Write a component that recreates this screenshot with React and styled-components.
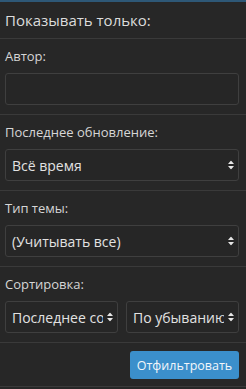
import React from "react";
import styled, { createGlobalStyle } from "styled-components";

const Global = createGlobalStyle`
  html, body { margin: 0; padding: 0; background: #272727; }
  body { font-family: "Open Sans", "Noto Sans", sans-serif; }
  * { box-sizing: border-box; }
`;

const Panel = styled.div`
  width: 246px;
  height: 389px;
  background: #272727;
  border-top: 2px solid #2e5877;
  color: #d6d6d6;
  display: flex;
  flex-direction: column;
`;

const Header = styled.div`
  height: 36px;
  padding: 0 7px 0 5px;
  display: flex;
  align-items: center;
  font-size: 15px;
  color: #dcdcdc;
`;

const Section = styled.div`
  border-top: 1px solid #3a3a3a;
  padding: 9px 7px 9px 5px;
  display: flex;
  flex-direction: column;
`;

const Label = styled.div`
  font-size: 13px;
  line-height: 17px;
  margin-bottom: 8px;
  color: #d6d6d6;
`;

const TextInput = styled.input`
  height: 32px;
  width: 100%;
  background: #262626;
  border: 1px solid #3f3f3f;
  border-radius: 3px;
  outline: none;
  color: #ddd;
  font: inherit;
`;

const SelectWrap = styled.div`
  position: relative;
  flex: 1;
  min-width: 0;
`;

const NativeSelect = styled.select`
  appearance: none;
  -webkit-appearance: none;
  width: 100%;
  height: 32px;
  background: #262626;
  border: 1px solid #3f3f3f;
  border-radius: 3px;
  color: #e2e2e2;
  font-family: "Open Sans", "Noto Sans", sans-serif;
  font-size: 14px;
  padding: 0 ${(p) => (p.$narrow ? "14px" : "20px")} 0 6px;
  outline: none;
  white-space: nowrap;
  overflow: hidden;
`;

const Arrow = styled.svg`
  position: absolute;
  right: 5px;
  top: 50%;
  transform: translateY(-50%);
  pointer-events: none;
`;

const Row = styled.div`
  display: flex;
  gap: 8px;
`;

const Footer = styled.div`
  border-top: 1px solid #3a3a3a;
  border-bottom: 1px solid #3a3a3a;
  padding: 8px 7px 7px 5px;
  display: flex;
  justify-content: flex-end;
`;

const Button = styled.button`
  height: 28px;
  width: 109px;
  background: #3b8fcb;
  border: none;
  border-radius: 3px;
  color: #f2f6fa;
  font-family: "Open Sans", "Noto Sans", sans-serif;
  font-size: 12.5px;
  padding: 0;
`;

function Select({ value, narrow }) {
  return (
    <SelectWrap>
      <NativeSelect $narrow={narrow} defaultValue={value}>
        <option>{value}</option>
      </NativeSelect>
      <Arrow width="6" height="9" viewBox="0 0 6 9">
        <path d="M3 0 L6 3.5 L0 3.5 Z" fill="#e6e6e6" />
        <path d="M3 9 L6 5.5 L0 5.5 Z" fill="#e6e6e6" />
      </Arrow>
    </SelectWrap>
  );
}

export default function App() {
  return (
    <>
      <Global />
      <Panel>
        <Header>Показывать только:</Header>
        <Section>
          <Label>Автор:</Label>
          <TextInput type="text" />
        </Section>
        <Section>
          <Label>Последнее обновление:</Label>
          <Select value="Всё время" />
        </Section>
        <Section>
          <Label>Тип темы:</Label>
          <Select value="(Учитывать все)" />
        </Section>
        <Section>
          <Label>Сортировка:</Label>
          <Row>
            <Select value="Последнее сообщение" narrow />
            <Select value="По убыванию" narrow />
          </Row>
        </Section>
        <Footer>
          <Button>Отфильтровать</Button>
        </Footer>
      </Panel>
    </>
  );
}
